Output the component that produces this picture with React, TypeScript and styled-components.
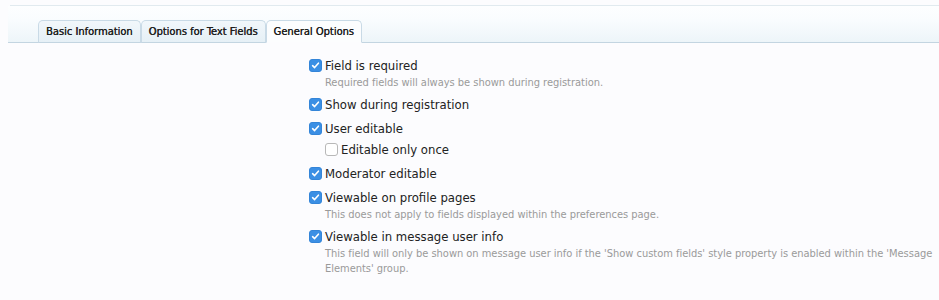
import React from "react";
import styled, { createGlobalStyle } from "styled-components";

const Global = createGlobalStyle`
  html, body { margin: 0; padding: 0; background: #fcfcfe; }
  body { font-family: Tahoma, "DejaVu Sans Condensed", "Liberation Sans", sans-serif; }
`;

const Page = styled.div`
  width: 939px;
  height: 300px;
  overflow: hidden;
  background: #fcfcfe;
`;

const TopLine = styled.div`
  margin: 5px 0 0 10px;
  height: 1px;
  background: #e1eaef;
`;

const TabStrip = styled.div`
  height: 37px;
  margin-left: 8px;
  box-sizing: border-box;
  background: linear-gradient(to bottom, #fdfeff 0%, #f9fcfe 40%, #edf5f9 100%);
  border-bottom: 1px solid #c3d5e1;
  display: flex;
  align-items: flex-end;
  padding-left: 30px;
`;

const Tab = styled.div<{ $active?: boolean }>`
  height: 23px;
  box-sizing: border-box;
  padding: 0 7px;
  margin-right: 0;
  margin-bottom: -1px;
  display: flex;
  align-items: center;
  font-size: 11px;
  font-weight: normal;
  color: #1e1e1e;
  text-shadow: 0.3px 0 0 #1e1e1e;
  border: 1px solid #c9dae6;
  border-bottom: 1px solid ${(p) => (p.$active ? "#fcfcfe" : "#c3d5e1")};
  border-radius: 5px 5px 0 0;
  background: ${(p) =>
    p.$active ? "#fcfdfe" : "linear-gradient(to bottom, #f1f7fb 0%, #e6f0f6 100%)"};
`;

const Form = styled.div`
  padding: 14px 0 0 309px;
  width: 630px;
`;

const List = styled.ul`
  list-style: none;
  margin: 0;
  padding: 0;
  display: flex;
  flex-direction: column;
  gap: 7px;
`;

const Item = styled.li<{ $nested?: boolean }>`
  margin: ${(p) => (p.$nested ? "-3px 0 0 16px" : "0")};
`;

const Label = styled.label`
  display: flex;
  align-items: center;
  gap: 3px;
  height: 17px;
  font-size: 13px;
  color: #222;
`;

const Box = styled.span<{ $checked?: boolean }>`
  width: 13px;
  height: 13px;
  box-sizing: border-box;
  border-radius: 3px;
  flex: none;
  display: inline-flex;
  align-items: center;
  justify-content: center;
  background: ${(p) => (p.$checked ? "#3b8fe4" : "#fff")};
  border: 1px solid ${(p) => (p.$checked ? "#3485d8" : "#b8b8b8")};
`;

const Hint = styled.p`
  margin: 1px 0 -1px 16px;
  font-size: 11px;
  line-height: 15px;
  letter-spacing: -0.02px;
  color: #9a9a9a;
`;

const Check = () => (
  <svg width="9" height="9" viewBox="0 0 9 9">
    <path d="M1.6 4.7 L3.6 6.6 L7.4 2.2" fill="none" stroke="#fff" strokeWidth="1.6" strokeLinecap="round" strokeLinejoin="round" />
  </svg>
);

type Opt = { label: string; checked: boolean; hint?: string; nested?: boolean };

const options: Opt[] = [
  { label: "Field is required", checked: true, hint: "Required fields will always be shown during registration." },
  { label: "Show during registration", checked: true },
  { label: "User editable", checked: true },
  { label: "Editable only once", checked: false, nested: true },
  { label: "Moderator editable", checked: true },
  { label: "Viewable on profile pages", checked: true, hint: "This does not apply to fields displayed within the preferences page." },
  {
    label: "Viewable in message user info",
    checked: true,
    hint: "This field will only be shown on message user info if the 'Show custom fields' style property is enabled within the 'Message Elements' group.",
  },
];

export default function App() {
  return (
    <Page>
      <Global />
      <TopLine />
      <TabStrip>
        <Tab>Basic Information</Tab>
        <Tab>Options for Text Fields</Tab>
        <Tab $active>General Options</Tab>
      </TabStrip>
      <Form>
        <List>
          {options.map((o) => (
            <Item key={o.label} $nested={o.nested}>
              <Label>
                <Box $checked={o.checked}>{o.checked && <Check />}</Box>
                {o.label}
              </Label>
              {o.hint && <Hint>{o.hint}</Hint>}
            </Item>
          ))}
        </List>
      </Form>
    </Page>
  );
}
